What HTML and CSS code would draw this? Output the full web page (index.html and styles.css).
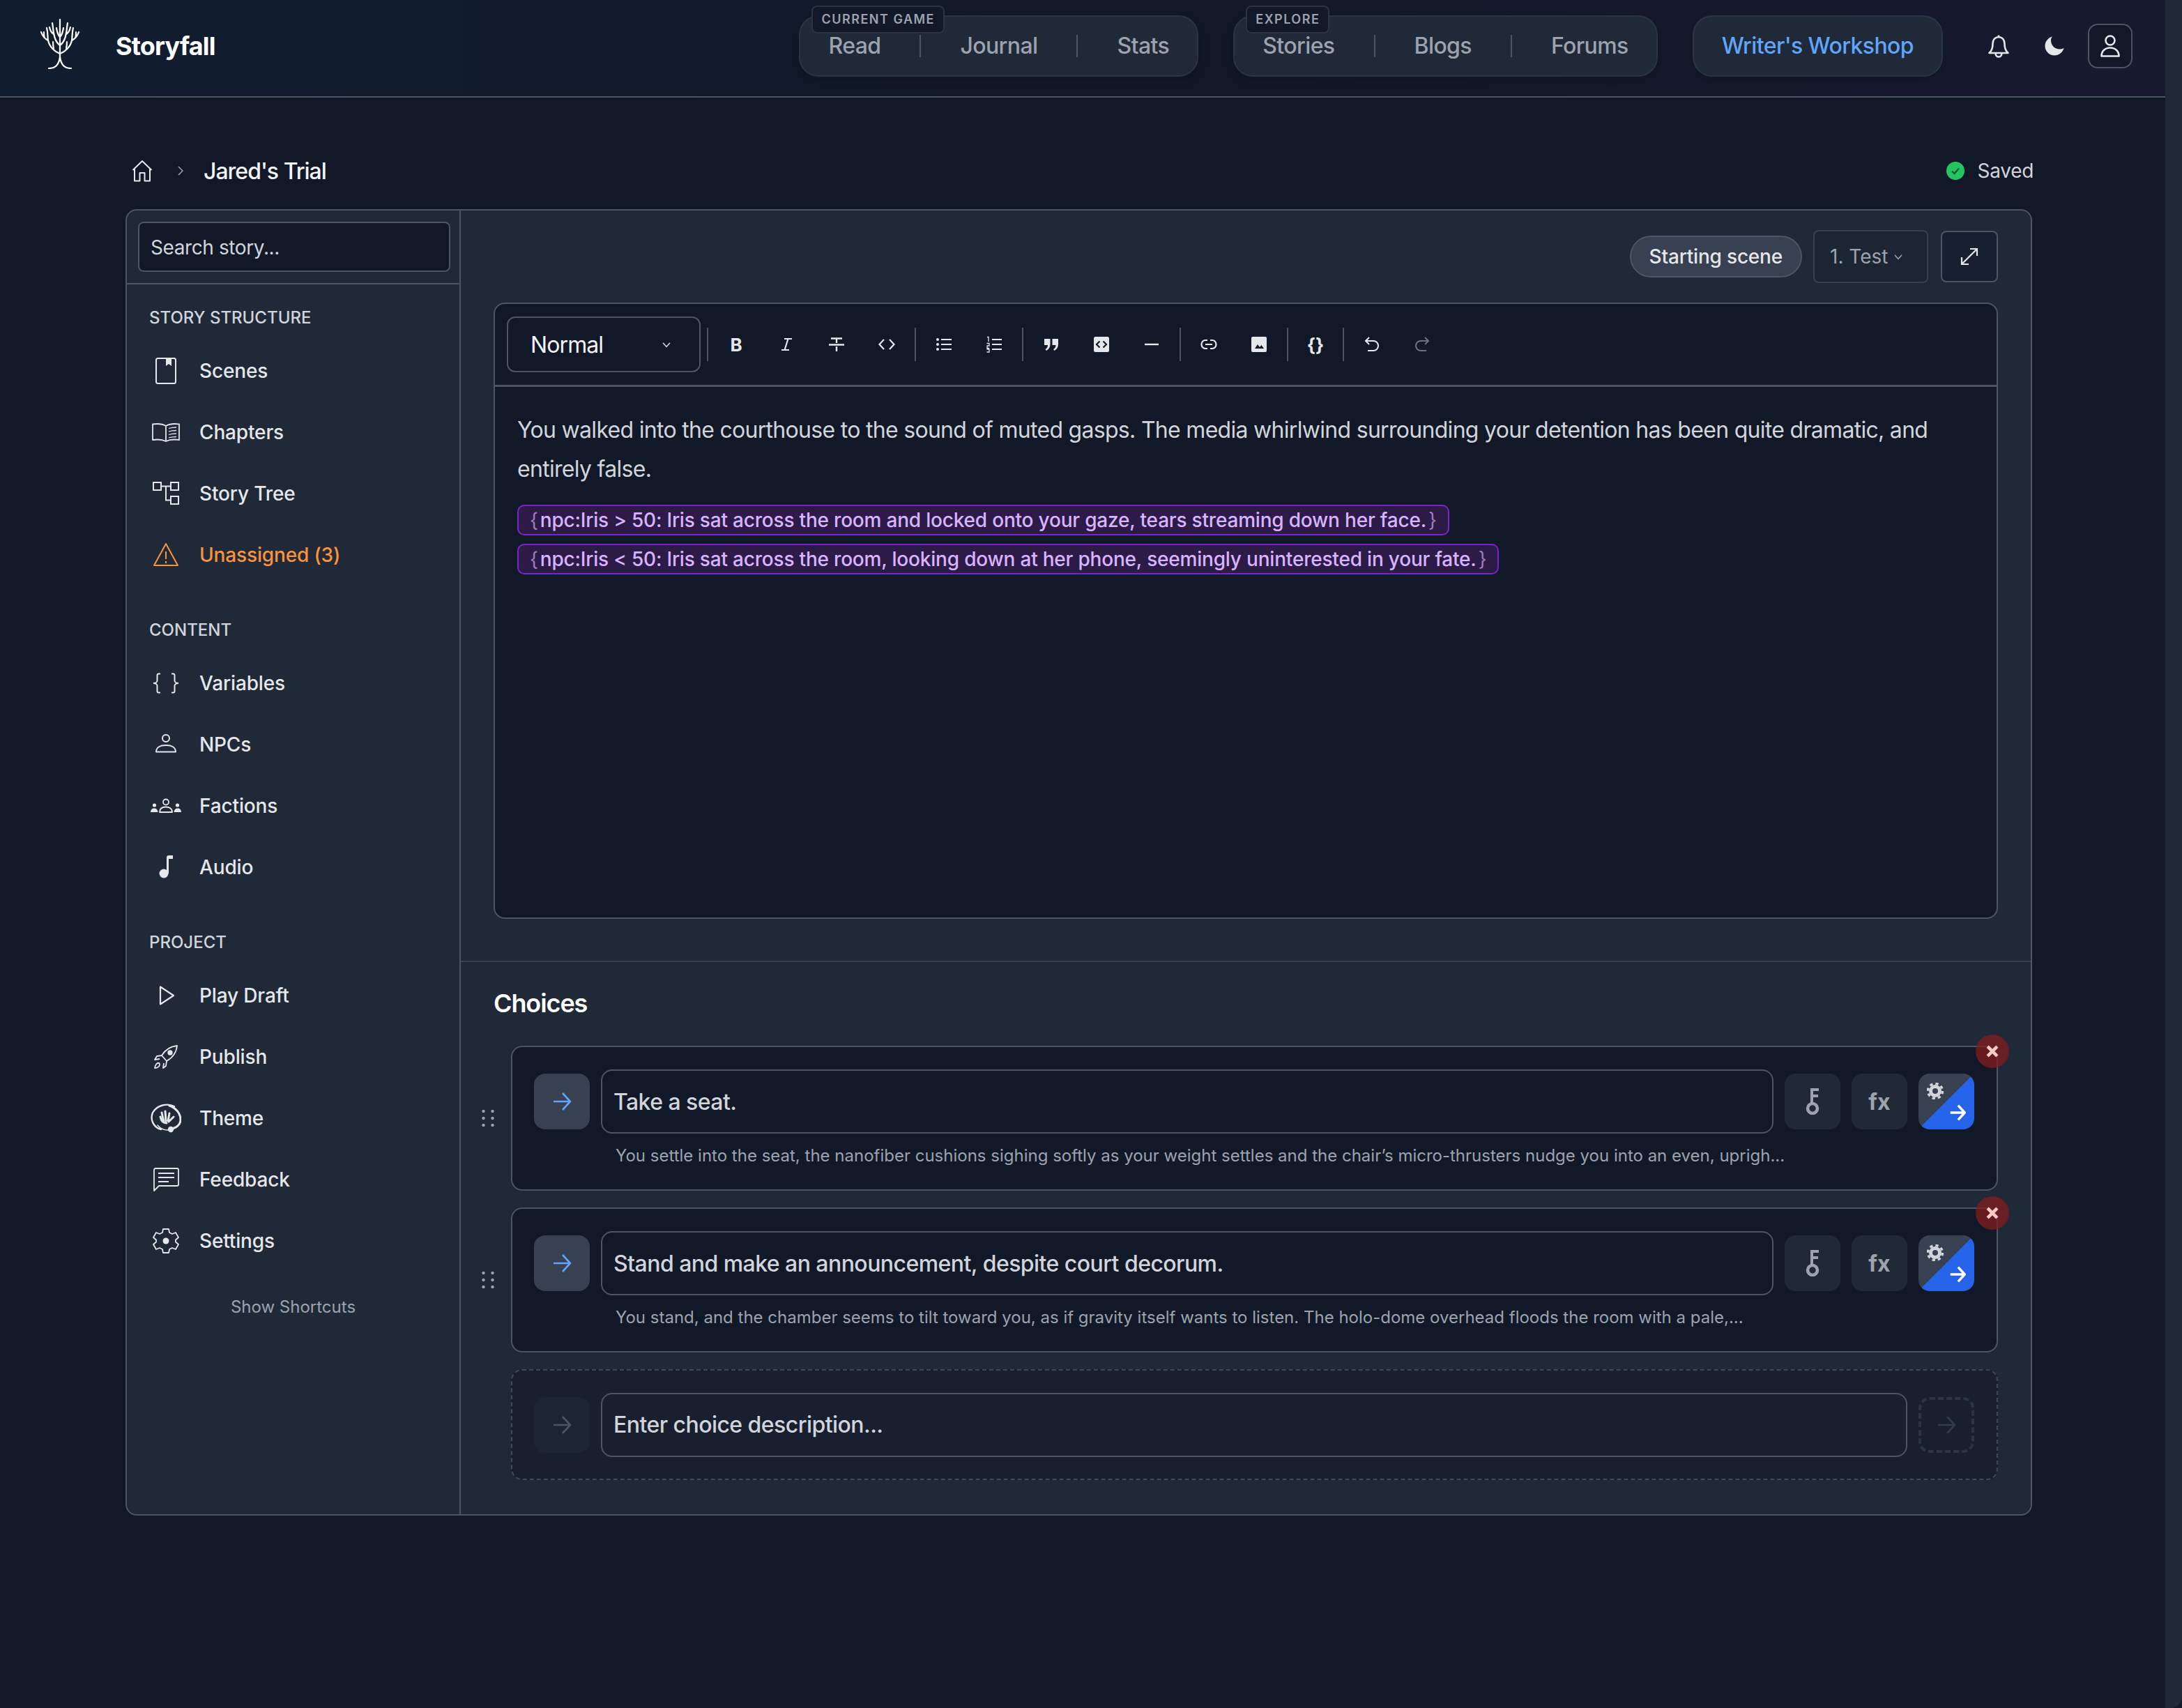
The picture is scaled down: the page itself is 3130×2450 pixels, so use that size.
FILE: index.html
```html
<!DOCTYPE html>
<html lang="en">
<head>
    <meta charset="UTF-8">
    <meta name="viewport" content="width=device-width, initial-scale=1.0">
    <title>Storyfall - Jared's Trial</title>
    <link rel="stylesheet" href="styles.css">
</head>
<body>
    <svg class="sprite" aria-hidden="true">
        <symbol id="arrow" viewBox="0 0 28 28"><path d="M2 14H26M15 2L26 14L15 26" fill="none" stroke="currentColor"/></symbol>
        <symbol id="cross" viewBox="0 0 16 16"><path d="M2.5 2.5L13.5 13.5M13.5 2.5L2.5 13.5" fill="none" stroke="currentColor" stroke-width="3.6"/></symbol>
        <symbol id="key" viewBox="0 0 20 38"><circle cx="10" cy="29" r="7" fill="none" stroke="currentColor" stroke-width="4.5"/><path d="M9 22V2H19M9 11H18" fill="none" stroke="currentColor" stroke-width="4"/></symbol>
        <symbol id="gear" viewBox="0 0 24 24"><circle cx="12" cy="12" r="6.5" fill="none" stroke="currentColor" stroke-width="5"/><circle cx="12" cy="12" r="10.500" fill="none" stroke="currentColor" stroke-width="3.500" stroke-dasharray="4.250 4"/></symbol>
    </svg>

    <div class="page">
        <header class="topbar">
            <a class="brand">
                <svg class="logo" viewBox="0 0 60 72" fill="none" stroke="#fff" stroke-width="2.2" stroke-linecap="round">
                    <path d="M14 71C22 71 28 68 30 55C32 68 38 71 46 71"/>
                    <path d="M30 56V1"/>
                    <path d="M30 50C22 47 15 40 13 31C12 26 13 20 11 13M13 31C9 29 5 25 3 19M8 27C7 25 7 22 7 19"/>
                    <path d="M30 50C38 47 45 40 47 31C48 26 47 20 49 13M47 31C51 29 55 25 57 19M52 27C53 25 53 22 53 19"/>
                    <path d="M30 38C24 34 22 27 21 20C20 15 20 11 19 6M21 22C18 20 16 17 15 12"/>
                    <path d="M30 38C36 34 38 27 39 20C40 15 40 11 41 6M39 22C42 20 44 17 45 12"/>
                    <path d="M30 26C27 23 26 20 25 13M30 26C33 23 34 20 35 13M21 42C20 39 20 37 20 33M39 42C40 39 40 37 40 33"/>
                </svg>
                <span class="brand-name">Storyfall</span>
            </a>
            <nav class="topnav">
                <div class="nav-group">
                    <span class="nav-label">CURRENT GAME</span>
                    <a class="nav-item">Read</a>
                    <a class="nav-item">Journal</a>
                    <a class="nav-item">Stats</a>
                </div>
                <div class="nav-group nav-explore">
                    <span class="nav-label">EXPLORE</span>
                    <a class="nav-item">Stories</a>
                    <a class="nav-item">Blogs</a>
                    <a class="nav-item">Forums</a>
                </div>
                <div class="nav-group nav-workshop">
                    <a class="nav-item">Writer's Workshop</a>
                </div>
            </nav>
            <div class="top-icons">
                <svg class="bell" viewBox="0 0 30 34" fill="none" stroke="#e5e7eb" stroke-width="2.6" stroke-linejoin="round"><path d="M15 1.500V4C9 4.500 6.500 9 6.500 14C6.500 20 5 24 1.500 27H28.500C25 24 23.500 20 23.500 14C23.500 9 21 4.500 15 4"/><path d="M10.500 27C10.500 30.500 12.500 32.500 15 32.500C17.500 32.500 19.500 30.500 19.500 27"/></svg>
                <svg class="moon" viewBox="0 0 28 28"><path fill="#e5e7eb" d="M11 0.500C5 2 0.500 7.500 0.500 14C0.500 21.500 6.500 27.500 14 27.500C20.500 27.500 26 23 27.500 17C25.500 18 23.500 18.500 21.500 18.500C14.500 18.500 9 13 9 6C9 4 9.500 2 11 0.500Z"/></svg>
                <div class="user-btn">
                    <svg viewBox="0 0 28 32" fill="none" stroke="#e5e7eb" stroke-width="2.600"><circle cx="14" cy="8" r="6.500"/><path d="M1.500 30.500C1.500 23 7 18.500 14 18.500C21 18.500 26.500 23 26.500 30.500Z" stroke-linejoin="round"/></svg>
                </div>
            </div>
        </header>

        <main class="content">
            <div class="crumbs">
                <svg class="home" viewBox="0 0 30 32" fill="none" stroke="#e5e7eb" stroke-width="2" stroke-linejoin="round"><path d="M1.500 15L15 2L28.500 15"/><path d="M4 12.500V30.500H11.500V19H18.500V30.500H26V12.500"/></svg>
                <svg class="crumb-sep" viewBox="0 0 10 16" fill="none" stroke="#9ca3af" stroke-width="1.500"><path d="M2 2L8 8L2 14"/></svg>
                <span class="crumb-title">Jared's Trial</span>
                <div class="saved">
                    <svg viewBox="0 0 26 26"><circle cx="13" cy="13" r="13" fill="#22c55e"/><path d="M8 13.500L11.500 17L18 9.500" fill="none" stroke="#14532d" stroke-width="2"/></svg>
                    <span>Saved</span>
                </div>
            </div>

            <div class="panel">
                <aside class="sidebar">
                    <div class="search-wrap">
                        <div class="search">Search story...</div>
                    </div>
                    <div class="side-nav">
                        <h3 class="side-heading">STORY STRUCTURE</h3>
                        <a class="side-item">
                            <span class="side-icon"><svg viewBox="0 0 40 40" fill="none" stroke="#e5e7eb" stroke-width="2"><rect x="6" y="2" width="28" height="36" rx="2.500"/><path d="M20 2H28V13L24 10L20 13Z" fill="#e5e7eb" stroke="none"/></svg></span>
                            Scenes
                        </a>
                        <a class="side-item">
                            <span class="side-icon"><svg viewBox="0 0 40 40" fill="none" stroke="#e5e7eb" stroke-width="1.800" stroke-linejoin="round"><path d="M20 11C15 8 8 7.500 1 8.500V31C8 30 15 30.500 20 33C25 30.500 32 30 39 31V8.500C32 7.500 25 8 20 11V33"/><path d="M24 14.500C27 13.500 31 13 35 13M24 19C27 18 31 17.500 35 17.500M24 23.500C27 22.500 31 22 35 22M24 28C27 27 31 26.500 35 26.500" stroke-width="1.300"/></svg></span>
                            Chapters
                        </a>
                        <a class="side-item">
                            <span class="side-icon"><svg viewBox="0 0 40 40" fill="none" stroke="#e5e7eb" stroke-width="2"><rect x="2" y="4" width="11" height="11"/><rect x="27" y="4" width="11" height="11"/><rect x="27" y="24" width="11" height="11"/><path d="M13 9.500H27M20 9.500V29.500H27"/></svg></span>
                            Story Tree
                        </a>
                        <a class="side-item side-warn">
                            <span class="side-icon"><svg viewBox="0 0 40 40" fill="none" stroke="#fb923c" stroke-width="2" stroke-linejoin="round"><path d="M20 4L37 35H3Z"/><path d="M20 15V26M20 29V32"/></svg></span>
                            Unassigned (3)
                        </a>

                        <h3 class="side-heading">CONTENT</h3>
                        <a class="side-item">
                            <span class="side-icon"><svg viewBox="0 0 40 40" fill="none" stroke="#e5e7eb" stroke-width="2"><path d="M12 6.500H9.500C8 6.500 7.500 7.500 7.500 9V16.500C7.500 18.500 5 20 2 20C5 20 7.500 21.500 7.500 23.500V31C7.500 32.500 8 33.500 9.500 33.500H12"/><path d="M28 6.500H30.500C32 6.500 32.500 7.500 32.500 9V16.500C32.500 18.500 35 20 38 20C35 20 32.500 21.500 32.500 23.500V31C32.500 32.500 32 33.500 30.500 33.500H28"/></svg></span>
                            Variables
                        </a>
                        <a class="side-item">
                            <span class="side-icon"><svg viewBox="0 0 40 40" fill="none" stroke="#e5e7eb" stroke-width="2"><circle cx="20" cy="11" r="5"/><path d="M6 30.500C6 24 12 21 20 21C28 21 34 24 34 30.500Z" stroke-linejoin="round"/></svg></span>
                            NPCs
                        </a>
                        <a class="side-item">
                            <span class="side-icon"><svg class="wide-icon" viewBox="0 0 44 44"><g fill="none" stroke="#e5e7eb" stroke-width="1.800" stroke-linejoin="round"><circle cx="22" cy="16.500" r="4"/><path d="M13 31C13 25.500 17 23.500 22 23.500C27 23.500 31 25.500 31 31Z"/></g><g fill="#e5e7eb"><circle cx="5.500" cy="21" r="2.600"/><circle cx="38.500" cy="21" r="2.600"/><path d="M0 31C0.500 27 2 25.500 5 25.500C8 25.500 10 27 10.500 31Z"/><path d="M44 31C43.500 27 42 25.500 39 25.500C36 25.500 34 27 33.500 31Z"/></g></svg></span>
                            Factions
                        </a>
                        <a class="side-item">
                            <span class="side-icon"><svg viewBox="0 0 40 40" fill="#e5e7eb"><circle cx="17" cy="29" r="6.500"/><path d="M21 29V6C21 4 22 3 24 3H30V8H24V29Z"/></svg></span>
                            Audio
                        </a>

                        <h3 class="side-heading">PROJECT</h3>
                        <a class="side-item">
                            <span class="side-icon"><svg viewBox="0 0 40 40" fill="none" stroke="#e5e7eb" stroke-width="2.200" stroke-linejoin="round"><path d="M12 7.500V32.500L31 20Z"/></svg></span>
                            Play Draft
                        </a>
                        <a class="side-item">
                            <span class="side-icon"><svg viewBox="0 0 40 40" fill="none" stroke="#e5e7eb" stroke-width="1.800" stroke-linejoin="round"><path d="M36 4C26 5 19 10 14 18L21 26C30 21 35 14 36 4Z"/><circle cx="26" cy="14" r="2.800" fill="#e5e7eb"/><path d="M14 18L7 19L4 24L11 23M21 26L20 33L16 36L17 29"/><path d="M10.500 29C8 28 5 30 4 36C9 36 12 33 10.500 29Z"/></svg></span>
                            Publish
                        </a>
                        <a class="side-item">
                            <span class="side-icon"><svg class="wide-icon" viewBox="0 0 44 44" fill="none" stroke="#e5e7eb" stroke-linecap="round"><path d="M34 5C24 0 9 3 3 14C-1 24 4 35 15 38" stroke-width="2.400"/><path d="M27 4C36 7 43 15 43 24C43 31 37 36 30 37" stroke-width="3"/><circle cx="29" cy="38" r="4.200" fill="#e5e7eb" stroke="none"/><path d="M10 32C16 39 24 40 29 38" stroke-width="1.500"/><path d="M23 29C17 29 15 25 14 20M19 27L16 14M22 26L21 12M25 26L27 15M26 27L33 20" stroke-width="3"/></svg></span>
                            Theme
                        </a>
                        <a class="side-item">
                            <span class="side-icon"><svg viewBox="0 0 40 40" fill="none" stroke="#e5e7eb" stroke-width="1.800" stroke-linejoin="round"><path d="M3 36V6C3 5 4 4 5 4H36C37 4 38 5 38 6V27C38 28 37 29 36 29H10Z"/><path d="M9 11H32M9 17H32M9 23H24"/></svg></span>
                            Feedback
                        </a>
                        <a class="side-item">
                            <span class="side-icon"><svg viewBox="0 0 40 40" fill="none" stroke="#e5e7eb" stroke-width="1.800" stroke-linejoin="round"><path d="M16 3H24L25 8L29 10L34 8L38 15L34 18.500V21.500L38 25L34 32L29 30L25 32L24 37H16L15 32L11 30L6 32L2 25L6 21.500V18.500L2 15L6 8L11 10L15 8Z"/><circle cx="20" cy="20" r="4.500" fill="#e5e7eb" stroke="none"/></svg></span>
                            Settings
                        </a>
                        <div class="shortcuts">Show Shortcuts</div>
                    </div>
                </aside>

                <section class="main-col">
                    <div class="scene-bar">
                        <span class="pill">Starting scene</span>
                        <div class="scene-select">1. Test <svg viewBox="0 0 12 8" fill="none" stroke="#9ca3af" stroke-width="1.300"><path d="M1.500 1.500L6 6.500L10.500 1.500"/></svg></div>
                        <div class="expand-btn"><svg viewBox="0 0 28 28" fill="none" stroke="#e5e7eb" stroke-width="2.200"><path d="M3 25L25 3M15 3H25V13M3 15V25H13"/></svg></div>
                    </div>

                    <div class="editor">
                        <div class="toolbar">
                            <div class="block-select">Normal <svg viewBox="0 0 12 8" fill="none" stroke="#d1d5db" stroke-width="1.300"><path d="M1.500 1.500L6 6.500L10.500 1.500"/></svg></div>
                            <i class="tool-sep"></i>
                            <span class="tool tool-bold">B</span>
                            <span class="tool"><svg viewBox="0 0 24 24" fill="none" stroke="#e5e7eb" stroke-width="2.200"><path d="M9 4H20M5 20H16M14.500 4L9.500 20"/></svg></span>
                            <span class="tool"><svg viewBox="0 0 24 24" fill="none" stroke="#e5e7eb" stroke-width="2.400"><path d="M4 3.500H20M12 3.500V10M1 12.500H23M12 15V22"/></svg></span>
                            <span class="tool"><svg viewBox="0 0 24 24" fill="none" stroke="#e5e7eb" stroke-width="2.200"><path d="M8 5L1.500 12L8 19M16 5L22.500 12L16 19"/></svg></span>
                            <i class="tool-sep"></i>
                            <span class="tool"><svg viewBox="0 0 24 24" fill="none" stroke="#e5e7eb" stroke-width="2.200"><path d="M8 5H23M8 12H23M8 19H23"/><circle cx="3" cy="5" r="2" fill="#e5e7eb" stroke="none"/><circle cx="3" cy="12" r="2" fill="#e5e7eb" stroke="none"/><circle cx="3" cy="19" r="2" fill="#e5e7eb" stroke="none"/></svg></span>
                            <span class="tool"><svg viewBox="0 0 24 24" fill="none" stroke="#e5e7eb" stroke-width="2.200"><path d="M9 5H23M9 12H23M9 19H23"/><path d="M2 1.500H4V8M1.500 10.500H5V14H2V17.500H5M1.500 19H5V23H1.500" stroke-width="1.300"/></svg></span>
                            <i class="tool-sep"></i>
                            <span class="tool"><svg viewBox="0 0 24 24" fill="#e5e7eb"><path d="M2 4H10.500V12C10.500 16 8.500 19 5 21L3.500 19C5.500 17.800 7 16 7 13H2ZM13.500 4H22V12C22 16 20 19 16.500 21L15 19C17 17.800 18.500 16 18.500 13H13.500Z"/></svg></span>
                            <span class="tool"><svg viewBox="0 0 24 24"><rect x="1" y="1" width="22" height="22" rx="2.500" fill="#e5e7eb"/><path d="M9.500 7.500L5 12L9.500 16.500M14.500 7.500L19 12L14.500 16.500" fill="none" stroke="#111827" stroke-width="2.200"/></svg></span>
                            <span class="tool"><svg viewBox="0 0 24 24" fill="none" stroke="#e5e7eb" stroke-width="2.400"><path d="M2 12H22"/></svg></span>
                            <i class="tool-sep"></i>
                            <span class="tool"><svg viewBox="0 0 24 24" fill="none" stroke="#e5e7eb" stroke-width="2.200"><path d="M10 6H7C4 6 1.500 8.500 1.500 12C1.500 15.500 4 18 7 18H10M14 6H17C20 6 22.500 8.500 22.500 12C22.500 15.500 20 18 17 18H14M7 12H17"/></svg></span>
                            <span class="tool"><svg viewBox="0 0 24 24"><rect x="1" y="1" width="22" height="22" rx="2" fill="#e5e7eb"/><path d="M6 18L10 12L13 16L15.500 13L19 18Z" fill="#111827"/></svg></span>
                            <i class="tool-sep"></i>
                            <span class="tool tool-narrow tool-braces">{}</span>
                            <i class="tool-sep"></i>
                            <span class="tool"><svg viewBox="0 0 24 24" fill="none" stroke="#e5e7eb" stroke-width="2"><path d="M8 2L3 7L8 12"/><path d="M3 7H14C18 7 21 10 21 14C21 18 18 21 14 21H6"/></svg></span>
                            <span class="tool tool-dim"><svg viewBox="0 0 24 24" fill="none" stroke="#6b7280" stroke-width="2"><path d="M16 2L21 7L16 12"/><path d="M21 7H10C6 7 3 10 3 14C3 18 6 21 10 21H18"/></svg></span>
                        </div>
                        <div class="editor-body">
                            <p class="editor-text">You walked into the courthouse to the sound of muted gasps. The media whirlwind surrounding your detention has been quite dramatic, and entirely false.</p>
                            <div class="conditions">
                                <span class="cond"><b>{</b>npc:Iris &gt; 50: Iris sat across the room and locked onto your gaze, tears streaming down her face.<b>}</b></span>
                                <span class="cond"><b>{</b>npc:Iris &lt; 50: Iris sat across the room, looking down at her phone, seemingly uninterested in your fate.<b>}</b></span>
                            </div>
                        </div>
                    </div>

                    <div class="choices">
                        <h2 class="choices-title">Choices</h2>
                        <div class="choice-list">
                            <div class="choice">
                                <svg class="drag" viewBox="0 0 18 26" fill="#9ca3af"><circle cx="2.500" cy="3" r="2.200"/><circle cx="15.500" cy="3" r="2.200"/><circle cx="2.500" cy="13" r="2.200"/><circle cx="15.500" cy="13" r="2.200"/><circle cx="2.500" cy="23" r="2.200"/><circle cx="15.500" cy="23" r="2.200"/></svg>
                                <span class="close"><svg><use href="#cross"/></svg></span>
                                <div class="choice-row">
                                    <span class="square sq-arrow"><svg><use href="#arrow"/></svg></span>
                                    <div class="choice-input">Take a seat.</div>
                                    <span class="square sq-dark"><svg class="key-icon"><use href="#key"/></svg></span>
                                    <span class="square sq-dark sq-fx">fx</span>
                                    <span class="square sq-split"><svg class="split-gear"><use href="#gear"/></svg><svg class="split-arrow"><use href="#arrow"/></svg></span>
                                </div>
                                <div class="choice-preview">You settle into the seat, the nanofiber cushions sighing softly as your weight settles and the chair’s micro-thrusters nudge you into an even, uprigh...</div>
                            </div>
                            <div class="choice">
                                <svg class="drag" viewBox="0 0 18 26" fill="#9ca3af"><circle cx="2.500" cy="3" r="2.200"/><circle cx="15.500" cy="3" r="2.200"/><circle cx="2.500" cy="13" r="2.200"/><circle cx="15.500" cy="13" r="2.200"/><circle cx="2.500" cy="23" r="2.200"/><circle cx="15.500" cy="23" r="2.200"/></svg>
                                <span class="close"><svg><use href="#cross"/></svg></span>
                                <div class="choice-row">
                                    <span class="square sq-arrow"><svg><use href="#arrow"/></svg></span>
                                    <div class="choice-input">Stand and make an announcement, despite court decorum.</div>
                                    <span class="square sq-dark"><svg class="key-icon"><use href="#key"/></svg></span>
                                    <span class="square sq-dark sq-fx">fx</span>
                                    <span class="square sq-split"><svg class="split-gear"><use href="#gear"/></svg><svg class="split-arrow"><use href="#arrow"/></svg></span>
                                </div>
                                <div class="choice-preview">You stand, and the chamber seems to tilt toward you, as if gravity itself wants to listen. The holo-dome overhead floods the room with a pale,...</div>
                            </div>
                            <div class="choice-add">
                                <span class="square sq-faint"><svg><use href="#arrow"/></svg></span>
                                <div class="choice-input">Enter choice description...</div>
                                <span class="square sq-dashed"><svg><use href="#arrow"/></svg></span>
                            </div>
                        </div>
                    </div>
                </section>
            </div>
        </main>
    </div>
    <div class="scrollbar"></div>
</body>
</html>
```

FILE: styles.css
```css
* {
    box-sizing: border-box;
}
html, body {
    height: 100%;
}
body {
    margin: 0;
    display: flex;
    height: 2450px;
    overflow: hidden;
    background-color: #111827;
    color: #e5e7eb;
    font-family: Inter, "Liberation Sans", sans-serif;
}
.sprite {
    display: none;
}
.page {
    flex: 1;
    min-width: 0;
}
.scrollbar {
    width: 24px;
    background-color: #1f2937;
    border-bottom-right-radius: 16px;
}

/* top bar */
.topbar {
    height: 140px;
    display: flex;
    align-items: center;
    padding: 0 47px 7px 56px;
    border-bottom: 2px solid #4b5563;
    background: linear-gradient(to right, #111e30, #111827 55%, #181a30);
}
.brand {
    display: flex;
    align-items: center;
    gap: 50px;
}
.logo {
    width: 60px;
    height: 72px;
    margin-top: -5px;
}
.brand-name {
    font-size: 36px;
    font-weight: 700;
    letter-spacing: -0.8px;
    color: #fff;
}
.topnav {
    margin-left: auto;
    display: flex;
    gap: 50px;
}
.nav-group {
    position: relative;
    height: 88px;
    display: flex;
    align-items: center;
    padding: 0 40px;
    background-color: #1f2937;
    border: 2px solid #293444;
    border-radius: 28px;
    box-shadow: 0 6px 14px rgba(0, 0, 0, 0.2);
}
.nav-label {
    position: absolute;
    top: -16px;
    left: 16px;
    height: 40px;
    display: flex;
    align-items: center;
    padding: 0 12px;
    font-size: 18px;
    font-weight: 600;
    letter-spacing: 1.5px;
    color: #9ca3af;
    background-color: #111827;
    border: 2px solid #293444;
    border-radius: 8px;
}
.nav-item {
    font-size: 32px;
    line-height: 32px;
    font-weight: 500;
    letter-spacing: -0.6px;
    color: #9ca3af;
}
.nav-item + .nav-item {
    margin-left: 56px;
    padding-left: 56px;
    border-left: 2px solid #4b5563;
}
.nav-workshop .nav-item {
    color: #60a5fa;
}
.top-icons {
    display: flex;
    align-items: center;
    margin-left: 65px;
}
.bell {
    width: 30px;
    height: 34px;
}
.moon {
    width: 28px;
    height: 28px;
    margin-left: 51px;
}
.user-btn {
    width: 64px;
    height: 64px;
    margin-left: 34px;
    display: flex;
    align-items: center;
    justify-content: center;
    background-color: #111827;
    border: 2px solid #4b5563;
    border-radius: 14px;
}
.user-btn svg {
    width: 28px;
    height: 32px;
}

/* page content */
.content {
    margin: 0 191px 0 180px;
}
.crumbs {
    height: 64px;
    margin: 73px 0 23px;
    display: flex;
    align-items: center;
}
.home {
    width: 30px;
    height: 32px;
    margin-left: 9px;
}
.crumb-sep {
    width: 10px;
    height: 16px;
    margin-left: 35px;
}
.crumb-title {
    margin-left: 28px;
    font-size: 32px;
    font-weight: 500;
    letter-spacing: -1px;
    color: #f3f4f6;
}
.saved {
    margin-left: auto;
    margin-right: -2px;
    display: flex;
    align-items: center;
    gap: 19px;
    font-size: 28px;
    letter-spacing: -0.3px;
    color: #d1d5db;
}
.saved svg {
    width: 26px;
    height: 26px;
}
.panel {
    height: 1874px;
    display: flex;
    background-color: #1f2937;
    border: 2px solid #4b5563;
    border-radius: 16px;
}

/* sidebar */
.sidebar {
    width: 479px;
    flex-shrink: 0;
    border-right: 2px solid #4b5563;
}
.search-wrap {
    padding: 16px 13px 16px 16px;
    border-bottom: 2px solid #4b5563;
}
.search {
    height: 72px;
    display: flex;
    align-items: center;
    padding: 2px 16px 0;
    font-size: 28px;
    letter-spacing: -0.4px;
    color: #d1d5db;
    background-color: #111827;
    border: 2px solid #4b5563;
    border-radius: 8px;
}
.side-nav {
    padding: 30px 0 0 32px;
}
.side-heading {
    margin: 46px 0 14px;
    font-size: 24px;
    line-height: 36px;
    font-weight: 500;
    color: #d1d5db;
}
.side-heading:first-child {
    margin-top: 0;
}
.side-item {
    height: 88px;
    display: flex;
    align-items: center;
    gap: 24px;
    font-size: 28px;
    font-weight: 500;
    letter-spacing: -0.15px;
    color: #e5e7eb;
}
.side-warn {
    color: #fb923c;
}
.side-icon {
    width: 48px;
    height: 48px;
    display: flex;
    align-items: center;
    justify-content: center;
}
.side-icon svg {
    width: 40px;
    height: 40px;
}
.side-icon .wide-icon {
    width: 44px;
    height: 44px;
}
.shortcuts {
    margin: 33px 0 0 -32px;
    font-size: 24px;
    line-height: 36px;
    text-align: center;
    color: #9ca3af;
}

/* editor column */
.main-col {
    flex: 1;
    min-width: 0;
}
.scene-bar {
    height: 132px;
    padding: 0 47px;
    display: flex;
    align-items: center;
    justify-content: flex-end;
    gap: 18px;
}
.pill {
    height: 60px;
    display: flex;
    align-items: center;
    padding: 0 26px;
    margin-right: -2px;
    font-size: 28px;
    font-weight: 500;
    letter-spacing: -0.2px;
    color: #e5e7eb;
    background-color: #374151;
    border: 2px solid #4b5563;
    border-radius: 30px;
}
.scene-select {
    width: 165px;
    height: 76px;
    display: flex;
    align-items: center;
    gap: 8px;
    padding-left: 22px;
    font-size: 28px;
    color: #9ca3af;
    background-color: #1c2533;
    border: 2px solid #374151;
    border-radius: 8px;
}
.scene-select svg {
    width: 14px;
    height: 9px;
}
.expand-btn {
    width: 82px;
    height: 74px;
    display: flex;
    align-items: center;
    justify-content: center;
    background-color: #172030;
    border: 2px solid #4b5563;
    border-radius: 8px;
}
.expand-btn svg {
    width: 28px;
    height: 28px;
}
.editor {
    height: 884px;
    margin: 0 47px;
    background-color: #111827;
    border: 2px solid #4b5563;
    border-radius: 16px;
}
.toolbar {
    height: 119px;
    display: flex;
    align-items: center;
    padding-left: 17px;
    border-bottom: 3px solid #4b5563;
}
.block-select {
    width: 278px;
    height: 80px;
    display: flex;
    align-items: center;
    justify-content: space-between;
    padding: 0 40px 0 32px;
    font-size: 32px;
    letter-spacing: -0.9px;
    color: #f3f4f6;
    background-color: #111827;
    border: 2px solid #4b5563;
    border-radius: 12px;
}
.block-select svg {
    width: 14px;
    height: 9px;
}
.tool-sep {
    width: 2px;
    height: 48px;
    margin: 0 4px;
    background-color: #4b5563;
}
.block-select + .tool-sep {
    margin-left: 9px;
    margin-right: 4px;
}
.tool {
    width: 72px;
    height: 48px;
    display: flex;
    align-items: center;
    justify-content: center;
}
.tool svg {
    width: 24px;
    height: 24px;
}
.tool-bold {
    font-size: 26px;
    font-weight: 700;
}
.tool-narrow {
    width: 70px;
}
.tool-braces {
    font-size: 26px;
    font-weight: 700;
}
.editor-body {
    padding: 34px 32px 0;
}
.editor-text {
    margin: 0;
    font-size: 32px;
    line-height: 56px;
    letter-spacing: -0.7px;
    color: #d1d5db;
}
.conditions {
    margin-top: 23px;
    display: flex;
    flex-direction: column;
    align-items: flex-start;
    gap: 12px;
}
.cond {
    height: 44px;
    display: flex;
    align-items: center;
    padding: 0 16px;
    font-size: 28px;
    font-weight: 500;
    letter-spacing: -0.2px;
    color: #d8b4fe;
    background-color: #2d1b47;
    border: 2px solid #7e22ce;
    border-radius: 10px;
}
.cond b {
    font-weight: 400;
    color: #9c7dbd;
}
.cond b:first-child {
    margin-right: 3px;
}
.cond b:last-child {
    margin-left: 3px;
}

/* choices */
.choices {
    margin-top: 60px;
    padding: 35px 47px 0;
    border-top: 2px solid #374151;
}
.choices-title {
    margin: 0 0 37px;
    font-size: 36px;
    line-height: 48px;
    font-weight: 600;
    letter-spacing: -1.1px;
    color: #fff;
}
.choice-list {
    margin-left: 25px;
    display: flex;
    flex-direction: column;
    gap: 24px;
}
.choice {
    position: relative;
    height: 208px;
    padding: 32px 32px 0 31px;
    background-color: #111827;
    border: 2px solid #4b5563;
    border-radius: 16px;
}
.drag {
    position: absolute;
    left: -44px;
    top: 89px;
    width: 18px;
    height: 26px;
}
.close {
    position: absolute;
    top: -18px;
    right: -18px;
    width: 48px;
    height: 48px;
    display: flex;
    align-items: center;
    justify-content: center;
    color: #fecaca;
    background-color: rgba(127, 29, 29, 0.78);
    border-radius: 50%;
}
.close svg {
    width: 20px;
    height: 20px;
}
.choice-row {
    display: flex;
    align-items: center;
    gap: 16px;
}
.square {
    width: 80px;
    height: 80px;
    flex-shrink: 0;
    display: flex;
    align-items: center;
    justify-content: center;
    border-radius: 16px;
    stroke-width: 2.6;
}
.square svg {
    width: 28px;
    height: 28px;
}
.sq-arrow {
    color: #60a5fa;
    background-color: #374151;
}
.sq-dark {
    color: #9ca3af;
    background-color: #1f2937;
}
.sq-fx {
    font-size: 32px;
    font-weight: 700;
}
.square .key-icon {
    width: 20px;
    height: 38px;
}
.sq-split {
    position: relative;
    background: linear-gradient(135deg, #374151 50%, #2563eb 50%);
}
.square .split-gear {
    position: absolute;
    top: 13px;
    left: 12px;
    width: 24px;
    height: 24px;
    color: #d1d5db;
}
.square .split-arrow {
    position: absolute;
    right: 12px;
    bottom: 12px;
    width: 24px;
    height: 24px;
    color: #fff;
    stroke-width: 4;
}
.choice-input {
    flex: 1;
    min-width: 0;
    height: 92px;
    display: flex;
    align-items: center;
    padding: 0 16px;
    font-size: 32px;
    font-weight: 500;
    letter-spacing: -0.55px;
    color: #d1d5db;
    background-color: transparent;
    border: 2px solid #4b5563;
    border-radius: 16px;
}
.choice-preview {
    margin: 14px 0 0 117px;
    font-size: 24px;
    line-height: 36px;
    color: #9ca3af;
}
.choice-add {
    height: 159px;
    display: flex;
    align-items: center;
    gap: 16px;
    padding: 0 32px 0 31px;
    background-color: #18202f;
    border: 2px dashed #3d4858;
    border-radius: 16px;
}
.sq-faint {
    color: #4b5563;
    background-color: #1c2533;
}
.sq-dashed {
    color: #323d4c;
    border: 4px dashed #2a3442;
}
```
